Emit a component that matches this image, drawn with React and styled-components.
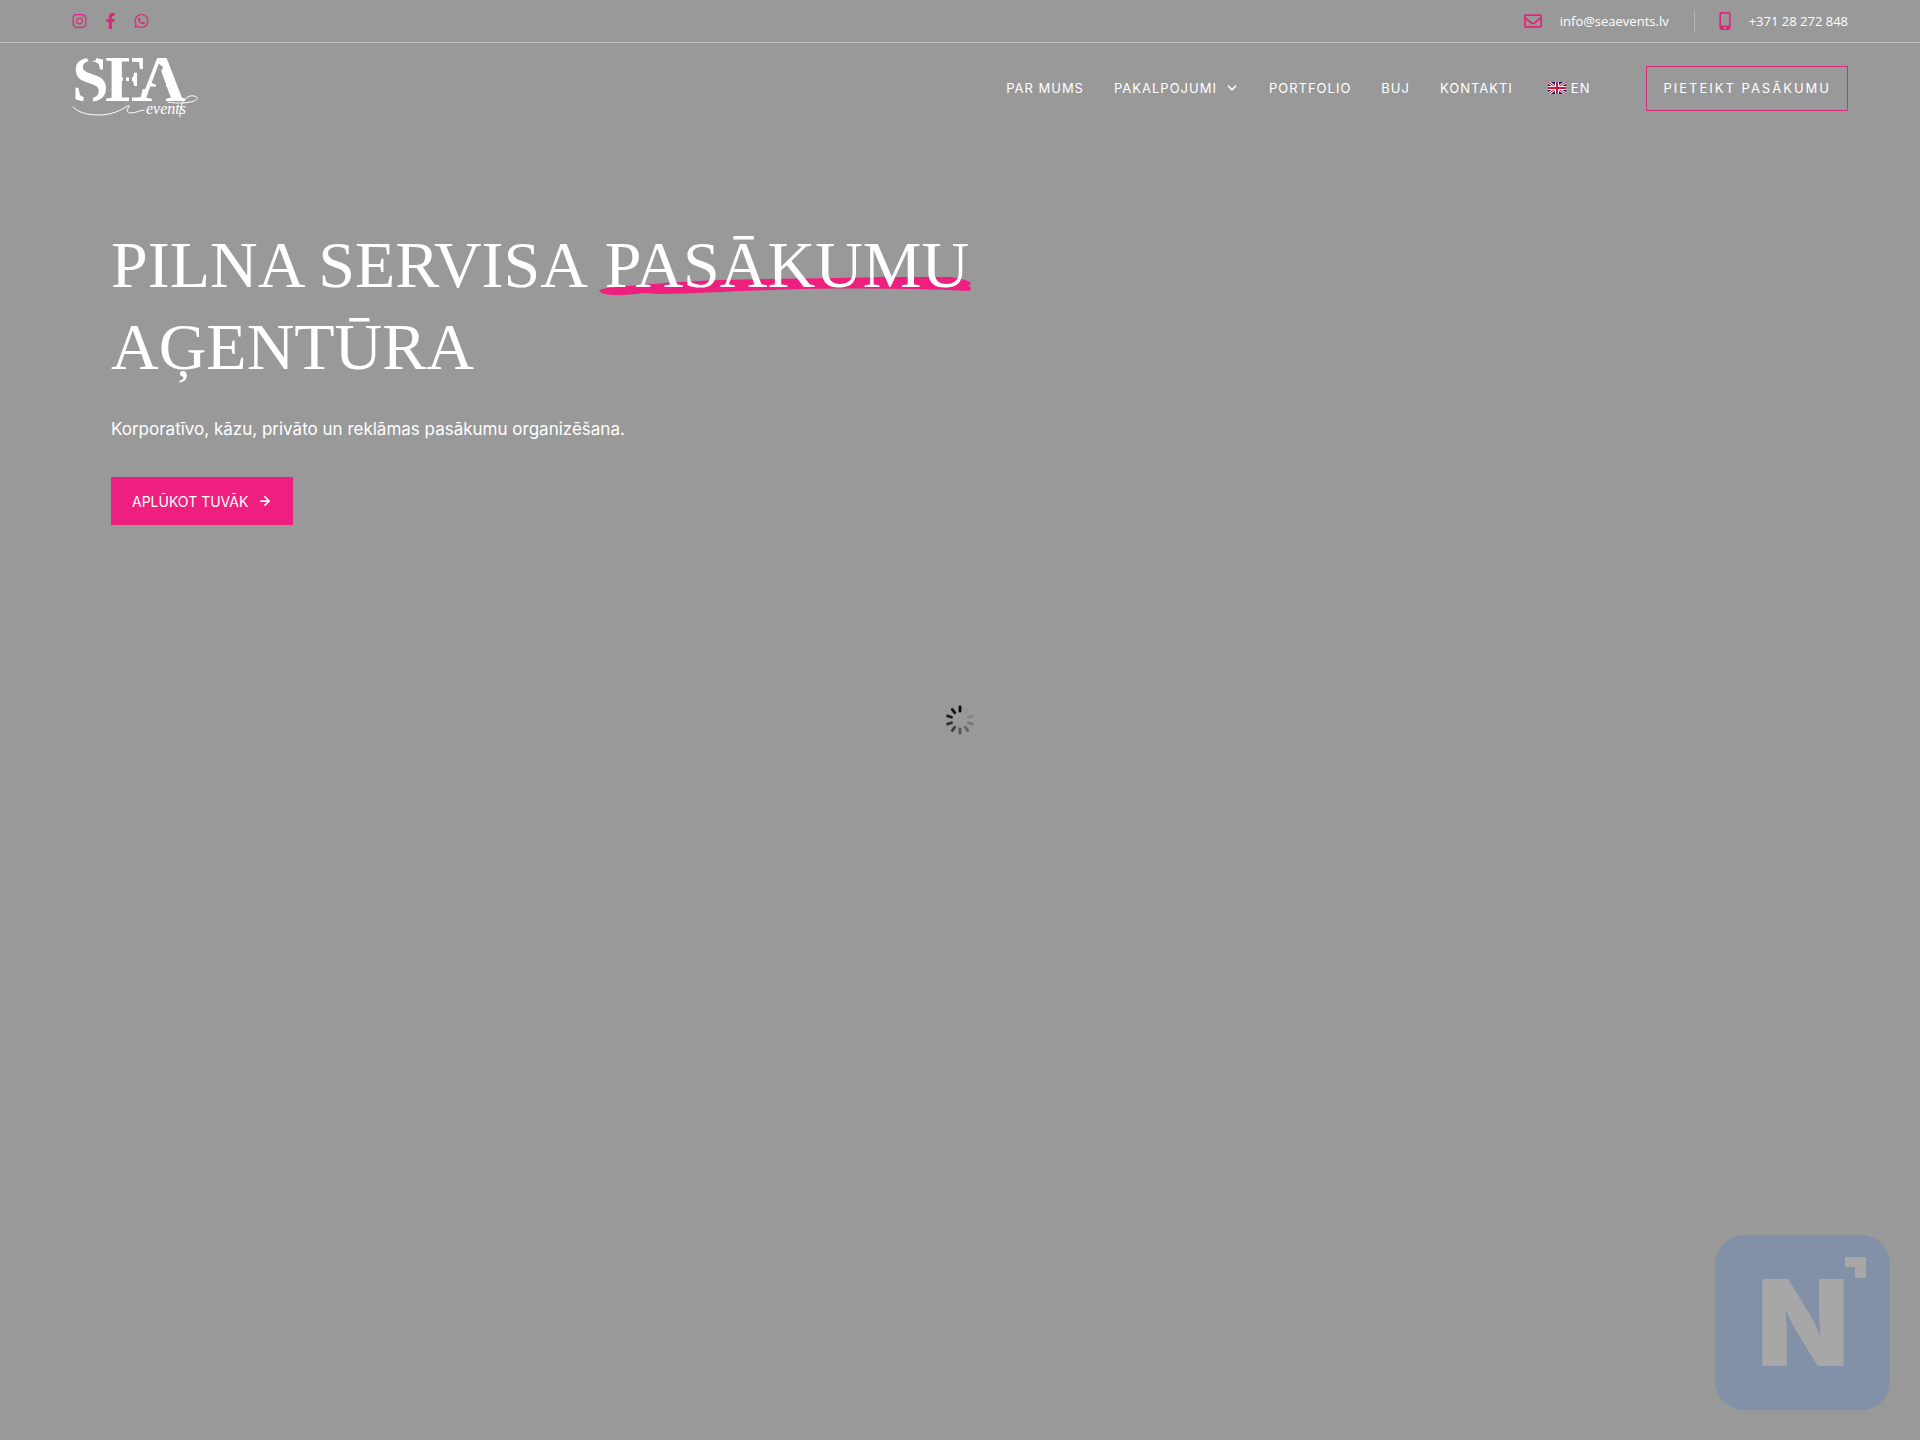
import React from "react";
import styled, { createGlobalStyle } from "styled-components";
import { FaInstagram, FaFacebookF, FaWhatsapp, FaRegEnvelope, FaMobileAlt } from "react-icons/fa";
import { FiChevronDown, FiArrowRight } from "react-icons/fi";

const PINK = "#ee1f7e";
const ICON_PINK = "#e0267b";
const GREY = "#999999";

const GlobalStyle = createGlobalStyle`
  * { box-sizing: border-box; }
  body {
    margin: 0;
    min-height: 100vh;
    background: ${GREY};
    color: #fff;
    font-family: Inter, "Open Sans", sans-serif;
  }
  a { color: inherit; text-decoration: none; }
`;

const TopBar = styled.div`
  display: flex;
  align-items: center;
  justify-content: space-between;
  height: 43px;
  padding: 0 72px;
  border-bottom: 1px solid #c2c2c2;
`;

const Socials = styled.div`
  display: flex;
  align-items: center;
  gap: 16px;
`;

const SocialLink = styled.a`
  display: flex;
  justify-content: center;
  width: 15px;
  color: ${ICON_PINK};
  font-size: 16px;
`;

const Contacts = styled.div`
  display: flex;
  align-items: center;
`;

const Contact = styled.a`
  display: flex;
  align-items: center;
  gap: 18px;
  font-family: "Open Sans", sans-serif;
  font-size: 13px;
  line-height: 22px;

  & + & {
    margin-left: 25px;
    padding-left: 24px;
    border-left: 1px solid #b4b4b4;
  }

  svg {
    color: ${ICON_PINK};
    font-size: 18px;
  }
`;

const PhoneIcon = styled(FaMobileAlt)`
  width: 12px;
`;

const Header = styled.header`
  display: flex;
  align-items: center;
  justify-content: space-between;
  height: 90px;
  padding: 0 72px;
`;

const LogoLink = styled.a`
  display: flex;

  svg {
    overflow: visible;
  }
`;

const Menu = styled.div`
  display: flex;
  align-items: center;
  gap: 56px;
`;

const Nav = styled.nav`
  display: flex;
  align-items: center;
  gap: 30px;
`;

const NavLink = styled.a`
  display: flex;
  align-items: center;
  gap: ${(p) => p.$gap || 8}px;
  margin-left: ${(p) => (p.$language ? 5 : 0)}px;
  font-size: 13px;
  line-height: 20px;
  letter-spacing: 1px;
`;

const RequestButton = styled.button`
  height: 45px;
  padding: 0 16px;
  border: 1px solid #d62c79;
  background: transparent;
  color: #fff;
  font-family: inherit;
  font-size: 13px;
  letter-spacing: 2px;
  cursor: pointer;
`;

const Hero = styled.main`
  display: flex;
  flex-direction: column;
  align-items: flex-start;
  padding: 91px 111px;
`;

const Title = styled.h1`
  max-width: 900px;
  margin: 0;
  font-family: "Liberation Serif", serif;
  font-size: 66px;
  font-weight: 400;
  line-height: 82px;
`;

const Highlight = styled.span`
  position: relative;
  display: inline-block;
  margin-left: 4px;
  isolation: isolate;
`;

const Brush = styled.svg`
  position: absolute;
  z-index: -1;
  left: -6px;
  bottom: 9px;
  width: calc(100% + 8px);
  height: 20px;
`;

const Lead = styled.p`
  margin: 28px 0 35px;
  font-size: 17px;
  line-height: 26px;
`;

const ViewButton = styled.button`
  display: flex;
  align-items: center;
  gap: 10px;
  height: 48px;
  padding: 0 21px;
  border: 0;
  background: ${PINK};
  color: #fff;
  font-family: inherit;
  font-size: 14px;
  cursor: pointer;
`;

const Loader = styled.div`
  position: fixed;
  top: 50%;
  left: 50%;
  transform: translate(-50%, -50%);
  display: flex;
`;

const Badge = styled.div`
  position: fixed;
  right: 30px;
  bottom: 30px;
  display: flex;
`;

function Logo() {
  return (
    <svg width="128" height="64" viewBox="0 0 128 64" role="img" aria-label="SEA events">
      <mask id="cuts" maskUnits="userSpaceOnUse" x="0" y="-20" width="128" height="100">
        <rect y="-20" width="128" height="100" fill="#fff" />
        <path d="M14 -1h10v5l-7 3zM12 40l9 2v5H11zM57 -1h3v48h-3zM51 20h3v6h-3zM84 27h10v5H84zM87 8l4 3-7 18-4-2z" fill="#000" />
      </mask>
      <text y="45" fill="#fff" fontFamily="'Liberation Serif', serif" fontWeight="700" fontSize="66" mask="url(#cuts)">
        S<tspan x="33">E</tspan><tspan x="66">A</tspan>
      </text>
      <g fill="none" stroke="#fff" strokeWidth="1" strokeLinecap="round">
        <path d="M1 51C6 56 14 59 27 59C40 59 49 54 54 51C57 49 58 49 57 51C54 54 55 57 59 57C64 57 68 54 72 54" />
        <path d="M96 46C106 48 117 47 122 45C128 43 125 39 118 40C111 42 107 51 108 61" />
      </g>
      <text x="74" y="58" fill="#fff" fontFamily="'Liberation Serif', serif" fontStyle="italic" fontSize="16">events</text>
    </svg>
  );
}

function Flag() {
  return (
    <svg width="18" height="12" viewBox="0 0 18 12" aria-hidden="true">
      <rect width="18" height="12" fill="#0a1560" />
      <path d="M0 0l18 12M18 0L0 12" stroke="#f3dfe6" strokeWidth="3" />
      <path d="M0 0l18 12M18 0L0 12" stroke="#d5143c" strokeWidth="1" />
      <path d="M9 0v12M0 6h18" stroke="#f6eaee" strokeWidth="4" />
      <path d="M9 0v12M0 6h18" stroke="#d5143c" strokeWidth="2" />
    </svg>
  );
}

const RAYS = [
  [0, 0.92], [324, 0.88], [288, 0.8], [252, 0.68], [216, 0.58],
  [180, 0.45], [144, 0.35], [108, 0.22], [72, 0.13], [36, 0.02],
];

function Spinner() {
  return (
    <svg width="32" height="32" viewBox="-16 -16 32 32" role="img" aria-label="Loading">
      {RAYS.map(([angle, opacity]) => (
        <rect key={angle} x="-1.4" y="-14.5" width="2.8" height="7" rx="1.3" opacity={opacity} transform={`rotate(${angle})`} />
      ))}
    </svg>
  );
}

export default function App() {
  return (
    <>
      <GlobalStyle />
      <TopBar>
        <Socials>
          <SocialLink href="#instagram" aria-label="Instagram"><FaInstagram /></SocialLink>
          <SocialLink href="#facebook" aria-label="Facebook"><FaFacebookF /></SocialLink>
          <SocialLink href="#whatsapp" aria-label="WhatsApp"><FaWhatsapp /></SocialLink>
        </Socials>
        <Contacts>
          <Contact href="mailto:info@seaevents.lv"><FaRegEnvelope />info@seaevents.lv</Contact>
          <Contact href="tel:+37128272848"><PhoneIcon />+371 28 272 848</Contact>
        </Contacts>
      </TopBar>
      <Header>
        <LogoLink href="#home"><Logo /></LogoLink>
        <Menu>
          <Nav>
            <NavLink href="#par-mums">PAR MUMS</NavLink>
            <NavLink href="#pakalpojumi">PAKALPOJUMI<FiChevronDown size={14} strokeWidth={3} /></NavLink>
            <NavLink href="#portfolio">PORTFOLIO</NavLink>
            <NavLink href="#buj">BUJ</NavLink>
            <NavLink href="#kontakti">KONTAKTI</NavLink>
            <NavLink href="#en" $gap={5} $language><Flag />EN</NavLink>
          </Nav>
          <RequestButton type="button">PIETEIKT PASĀKUMU</RequestButton>
        </Menu>
      </Header>
      <Hero>
        <Title>
          PILNA SERVISA{" "}
          <Highlight>
            PASĀKUMU
            <Brush viewBox="0 0 370 20" preserveAspectRatio="none" aria-hidden="true">
              <path fill={PINK} d="M0 14C2 10 30 9 55 7C110 2 180 2 235 1C280 0 320 -1 350 0C358 1 366 3 370 6L367 9L370 11L368 14C300 11 230 11 175 13C130 14 95 17 60 17C50 17 45 15 38 17C24 18 6 20 0 14Z" />
            </Brush>
          </Highlight>
          <br />
          AĢENTŪRA
        </Title>
        <Lead>Korporatīvo, kāzu, privāto un reklāmas pasākumu organizēšana.</Lead>
        <ViewButton type="button">APLŪKOT TUVĀK<FiArrowRight size={14} strokeWidth={3} /></ViewButton>
      </Hero>
      <Loader><Spinner /></Loader>
      <Badge>
        <svg width="175" height="175" viewBox="0 0 175 175" role="img" aria-label="N">
          <rect width="175" height="175" rx="29" fill="#8391a8" />
          <text x="88" y="131" textAnchor="middle" fill="#a7a7a7" fontFamily="Inter, sans-serif" fontWeight="900" fontSize="120">N</text>
          <path d="M130 22h21v21h-11v-11h-10z" fill="#a7a7a7" />
        </svg>
      </Badge>
    </>
  );
}
